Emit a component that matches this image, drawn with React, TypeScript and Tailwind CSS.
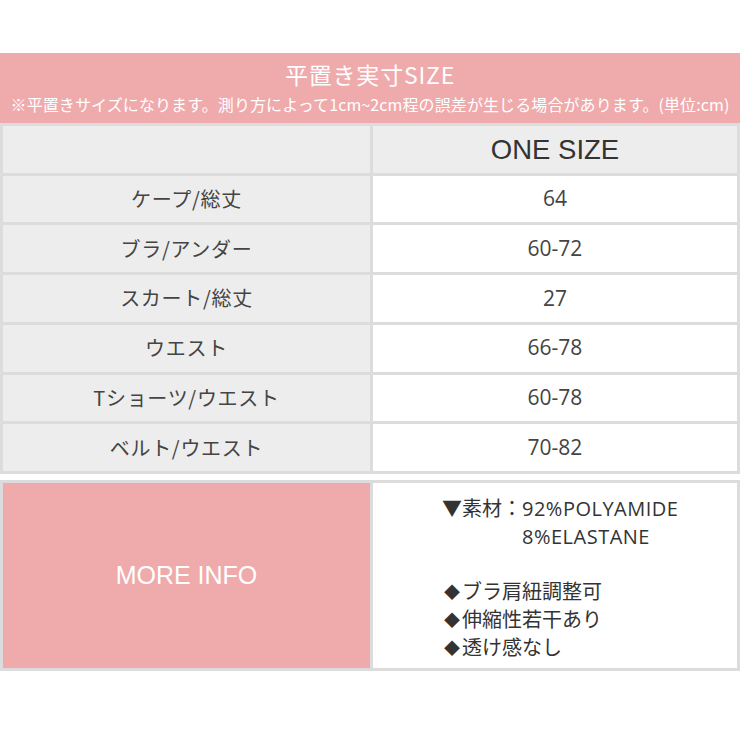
import React from "react";

const jp = { fontFamily: '"Noto Sans CJK JP", "Noto Sans", sans-serif' };
const num = { fontFamily: '"Open Sans", "Noto Sans CJK JP", sans-serif' };
const arial = { fontFamily: '"Liberation Sans", Arial, sans-serif' };

const rows: [string, string][] = [
  ["ケープ/総丈", "64"],
  ["ブラ/アンダー", "60-72"],
  ["スカート/総丈", "27"],
  ["ウエスト", "66-78"],
  ["Tショーツ/ウエスト", "60-78"],
  ["ベルト/ウエスト", "70-82"],
];

function Diamond() {
  return <span className="inline-block w-[20px] text-[16px] text-center align-[1px]">◆</span>;
}

export default function App() {
  return (
    <div className="w-[740px] h-[740px] bg-white overflow-hidden">
      <div className="h-[53px]" />
      <div className="h-[70px] bg-[#efaaac] flex flex-col items-center text-white" style={jp}>
        <div className="text-[23px] leading-[30px] mt-[6px] tracking-[0.8px]">平置き実寸SIZE</div>
        <div className="text-[16px] leading-[20px] mt-[5px] tracking-[0.1px]">
          ※平置きサイズになります。測り方によって1cm~2cm程の誤差が生じる場合があります。(単位:cm)
        </div>
      </div>
      <div className="h-[351px] bg-[#dcdcdc] p-[3px] grid grid-cols-[367px_1fr] grid-rows-[repeat(7,1fr)] gap-[3px]">
        <div className="bg-[#ededed]" />
        <div className="bg-[#ededed] flex items-center justify-center text-[27.5px] text-[#333]" style={arial}>
          ONE SIZE
        </div>
        {rows.map(([label, value]) => (
          <React.Fragment key={label}>
            <div className="bg-[#ededed] flex items-center justify-center text-[20px] tracking-[0.7px] text-[#444]" style={jp}>
              {label}
            </div>
            <div className="bg-white flex items-center justify-center text-[21px] text-[#444]" style={num}>
              {value}
            </div>
          </React.Fragment>
        ))}
      </div>
      <div className="mt-[6px] h-[191px] bg-[#dcdcdc] p-[3px] grid grid-cols-[367px_1fr] gap-[3px]">
        <div className="bg-[#efaaac] flex items-center justify-center text-white text-[25px]" style={arial}>
          MORE INFO
        </div>
        <div className="bg-white pl-[69px] pt-[11px] text-[20px] leading-[28px] text-[#333]" style={jp}>
          <div>
            ▼素材：<span className="tracking-[0.5px]" style={num}>92%POLYAMIDE</span>
          </div>
          <div className="pl-[80px] tracking-[0.5px]" style={num}>8%ELASTANE</div>
          <div className="h-[26px]" />
          <div><Diamond />ブラ肩紐調整可</div>
          <div><Diamond />伸縮性若干あり</div>
          <div><Diamond />透け感なし</div>
        </div>
      </div>
    </div>
  );
}
